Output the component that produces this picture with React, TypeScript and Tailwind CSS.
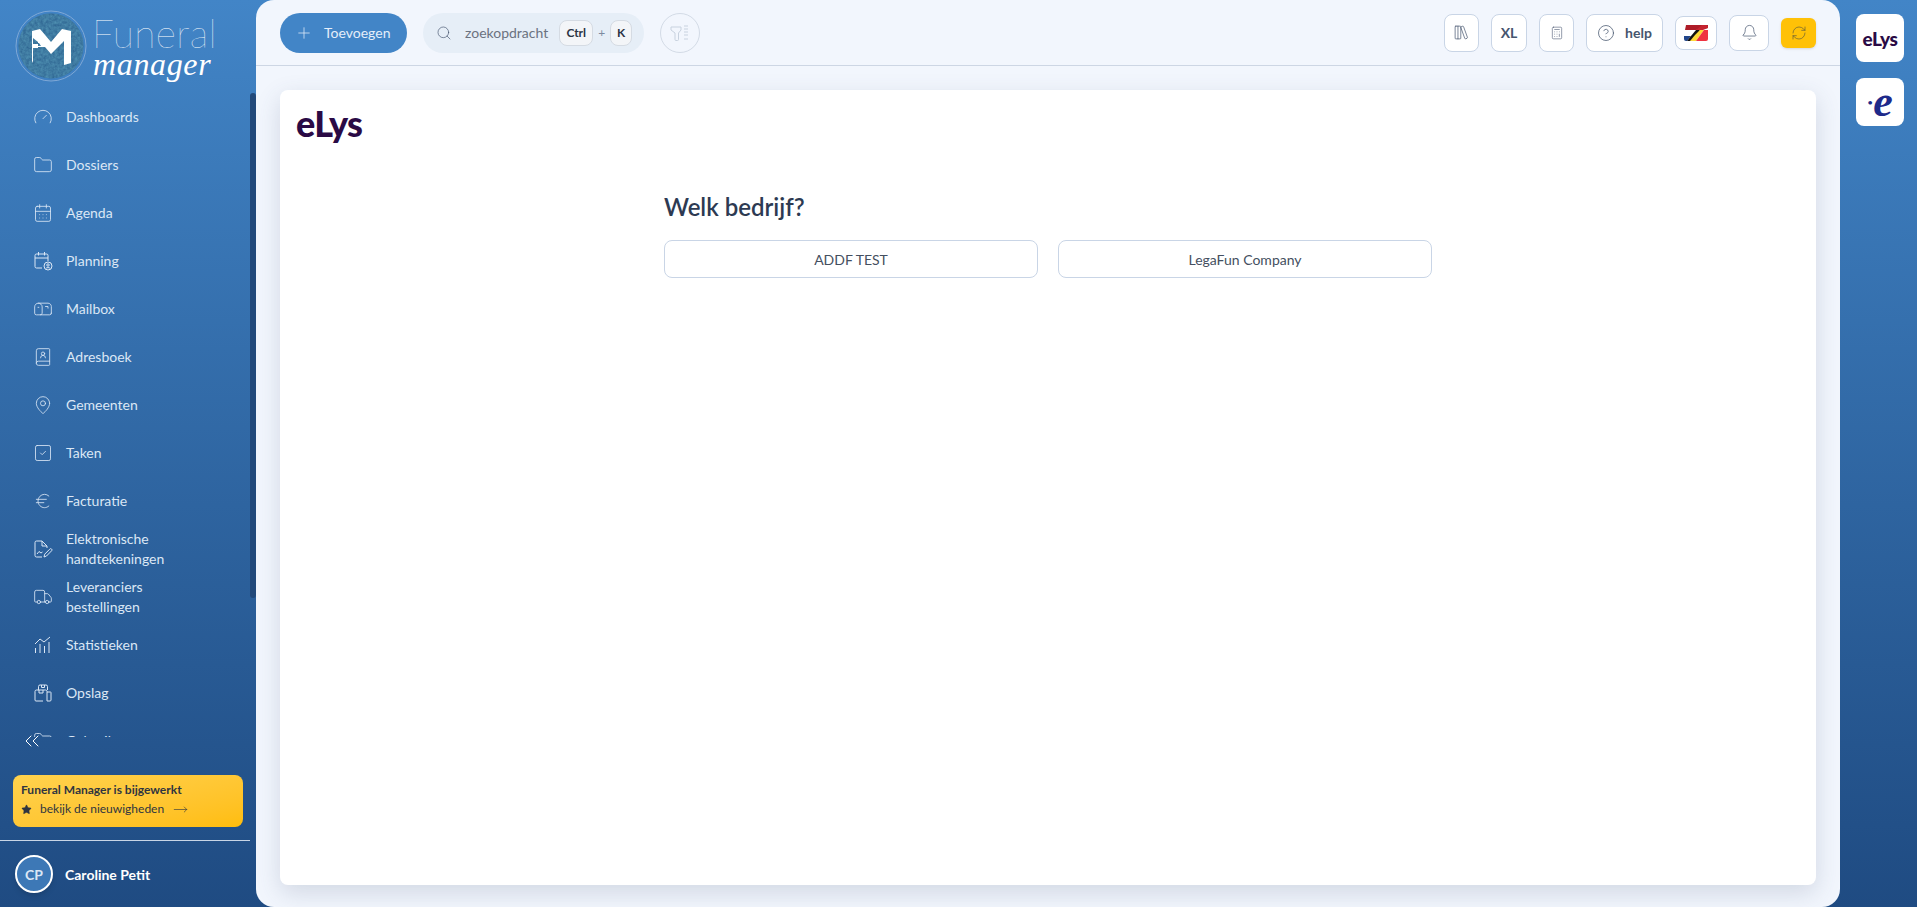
import {
  BookUser,
  CalendarDays,
  ChevronsLeft,
  Euro,
  Folder,
  Gauge,
  MapPin,
  Plus,
  Search,
  SquareCheck,
  Star,
  Truck,
  Mailbox,
  Bell,
  RefreshCw,
  Calculator,
  CircleHelp,
  MoveRight,
  LibraryBig,
} from "lucide-react";
import type { ReactNode } from "react";

const FONT = "font-['Lato','Open_Sans',sans-serif]";

const PlanningIcon = () => (
  <svg width="20" height="20" viewBox="0 0 20 20" fill="none" stroke="currentColor" strokeWidth="1">
    <path d="M9 17H3.5A1.5 1.5 0 0 1 2 15.500V4.500A1.500 1.500 0 0 1 3.500 3h10A1.500 1.500 0 0 1 15 4.500V10" />
    <path d="M2 7h13M5.500 1v3.500M11.500 1v3.500" />
    <circle cx="15" cy="15" r="4" />
    <circle cx="15" cy="14" r="1.200" />
    <path d="M12.800 17.500c.6-1.200 3.800-1.200 4.400 0" />
  </svg>
);

const SignIcon = () => (
  <svg width="20" height="20" viewBox="0 0 20 20" fill="none" stroke="currentColor" strokeWidth="1">
    <path d="M9 18H3.500A1.500 1.500 0 0 1 2 16.500V3.500A1.500 1.500 0 0 1 3.500 2H9l5 5v2" />
    <path d="M9 2v5h5" />
    <path d="M4 15l2-2.500 2 1.500 1.500-1" />
    <path d="M11 18l.7-2.800 5-5a1.200 1.200 0 0 1 2 1.500l-5.200 5.300z" />
  </svg>
);

const StatsIcon = () => (
  <svg width="20" height="20" viewBox="0 0 20 20" fill="none" stroke="currentColor" strokeWidth="1">
    <path d="M2 9l5-5 4 3 6-5" />
    <path d="M2.500 18v-5M7 18V9M11.500 18v-7M16 18V7" />
  </svg>
);

const StorageIcon = () => (
  <svg width="20" height="20" viewBox="0 0 20 20" fill="none" stroke="currentColor" strokeWidth="1">
    <path d="M5.500 7V3.500A1.500 1.500 0 0 1 7 2h6a1.500 1.500 0 0 1 1.500 1.500V7" />
    <path d="M8.500 2v2.500h3V2" />
    <path d="M10 18H3a1 1 0 0 1-1-1V8.500A1.500 1.500 0 0 1 3.500 7h9A1.500 1.500 0 0 1 14 8.500V18" />
    <path d="M14 9h3.500A.5.500 0 0 1 18 9.500V17a1 1 0 0 1-1 1h-3" />
    <path d="M6 7v3h4V7" />
  </svg>
);

const ElysWord = ({ className }: { className: string }) => (
  <span className={`font-['Lato',sans-serif] font-black leading-none tracking-[-0.02em] text-[#2a0a45] ${className}`}>
    eLys
  </span>
);

const FlagIcon = () => (
  <svg width="24" height="16" viewBox="0 0 24 16">
    <path d="M2 0h22v3L12 5H1z" fill="#ae1c28" />
    <path d="M18 0h4a2 2 0 0 1 2 2v1l-5 2H12z" fill="#c4232f" />
    <path d="M1 5h11L7 11H0z" fill="#ffffff" />
    <path d="M0 11h7l-4 5H2a2 2 0 0 1-2-2z" fill="#21468b" />
    <path d="M7 11l-4 5h6l7-11h-4z" fill="#111111" />
    <path d="M12 16H6l5-6 5-5h4z" fill="#fdd835" />
    <path d="M12 16l8-11h4v9a2 2 0 0 1-2 2z" fill="#ef3340" />
  </svg>
);

const LogoMark = () => (
  <svg width="72" height="72" viewBox="0 0 72 72" className="shrink-0">
    <defs>
      <filter id="grain" x="0" y="0" width="100%" height="100%">
        <feTurbulence type="fractalNoise" baseFrequency="0.35" numOctaves="3" seed="4" />
        <feColorMatrix values="0 0 0 0 0.1  0 0 0 0 0.34  0 0 0 0 0.5  0.9 0 0 0 0" />
      </filter>
    </defs>
    <circle cx="36" cy="36" r="35" fill="none" stroke="#7fa8d6" strokeWidth="1" />
    <circle cx="36" cy="36" r="32.500" fill="#2a5f8d" />
    <g clipPath="url(#mark)">
      <circle cx="36" cy="36" r="32.500" filter="url(#grain)" />
    </g>
    <clipPath id="mark">
      <circle cx="36" cy="36" r="32.500" />
    </clipPath>
    <path
      d="M17 53V21l8-2 11 13 11-13 9 2v32l-7 2V31L36 44l-6-7h-7v-1h3l-2-3h-1v-1l-5-4v6h5v4h-5v13z"
      fill="#ffffff"
    />
  </svg>
);

const Box = ({ className, children }: { className: string; children: ReactNode }) => (
  <button className={`flex items-center justify-center rounded-lg border border-[#c9d5e6] bg-white text-[#46556e] ${className}`}>
    {children}
  </button>
);

const menu: { label: ReactNode; icon: ReactNode }[] = [
  { label: "Dashboards", icon: <Gauge size={20} strokeWidth={1} /> },
  { label: "Dossiers", icon: <Folder size={20} strokeWidth={1} /> },
  { label: "Agenda", icon: <CalendarDays size={20} strokeWidth={1} /> },
  { label: "Planning", icon: <PlanningIcon /> },
  { label: "Mailbox", icon: <Mailbox size={20} strokeWidth={1} /> },
  { label: "Adresboek", icon: <BookUser size={20} strokeWidth={1} /> },
  { label: "Gemeenten", icon: <MapPin size={20} strokeWidth={1} /> },
  { label: "Taken", icon: <SquareCheck size={20} strokeWidth={1} /> },
  { label: "Facturatie", icon: <Euro size={20} strokeWidth={1} /> },
  { label: <>Elektronische<br />handtekeningen</>, icon: <SignIcon /> },
  { label: <>Leveranciers<br />bestellingen</>, icon: <Truck size={20} strokeWidth={1} /> },
  { label: "Statistieken", icon: <StatsIcon /> },
  { label: "Opslag", icon: <StorageIcon /> },
  { label: "Gebruikers", icon: <Folder size={20} strokeWidth={1} /> },
];

const Sidebar = () => (
  <aside className="flex h-full w-[256px] shrink-0 flex-col">
    <div className="flex h-[93px] shrink-0 items-center pl-[15px] pb-[2px]">
      <LogoMark />
      <div className="ml-[5px] flex flex-col text-white">
        <span className="font-['Lato',sans-serif] text-[39px] font-thin leading-[38px] tracking-[0.01em]">Funeral</span>
        <span className="-mt-[1px] ml-[1px] font-['Liberation_Serif',serif] text-[32px] italic leading-[26px] tracking-[0.02em]">
          manager
        </span>
      </div>
    </div>

    <div className="relative h-[644px] shrink-0 overflow-hidden">
      <nav className="flex flex-col">
        {menu.map((item, i) => (
          <a key={i} className="flex h-[48px] items-center pl-[33px] text-[#dbe7f5]">
            <span className="flex w-[20px] justify-center">{item.icon}</span>
            <span className="ml-[13px] text-[14px] leading-[20px]">{item.label}</span>
          </a>
        ))}
      </nav>
      <div className="absolute right-0 top-0 h-[505px] w-[6px] rounded-full bg-[#22497a]" />
    </div>

    <div className="relative flex h-[38px] shrink-0 items-start pl-[20px]">
      <ChevronsLeft size={24} strokeWidth={1} className="-mt-[8px] text-white" />
    </div>

    <div className="mx-[13px] h-[52px] shrink-0 rounded-lg bg-gradient-to-br from-[#ffd24d] to-[#ffbd0a] px-[8px] py-[6px] text-[#2f3540]">
      <div className="text-[12px] font-bold leading-[18px]">Funeral Manager is bijgewerkt</div>
      <div className="mt-[1px] flex items-center text-[12px] leading-[18px]">
        <Star size={11} fill="currentColor" strokeWidth={1} />
        <span className="ml-[8px]">bekijk de nieuwigheden</span>
        <MoveRight size={15} strokeWidth={1} className="ml-[9px]" />
      </div>
    </div>

    <div className="mt-[13px] mr-[6px] border-t border-[#c8d5e6]" />

    <div className="flex flex-1 items-center pl-[15px]">
      <div className="flex h-[38px] w-[38px] items-center justify-center rounded-full border-[2px] border-white bg-[#3d78b6] text-[14px] font-bold text-[#dbe7f5] shadow-md">
        CP
      </div>
      <span className="ml-[12px] text-[14px] font-bold text-white">Caroline Petit</span>
    </div>
  </aside>
);

const Topbar = () => (
  <header className="flex h-[66px] shrink-0 items-center border-b border-[#cdd6e4] pl-[24px] pr-[24px]">
    <button className="flex h-[40px] w-[127px] items-center rounded-full bg-[#4285c7] pl-[15px] text-[14px] text-[#e4eefa]">
      <Plus size={18} strokeWidth={1} />
      <span className="ml-[11px]">Toevoegen</span>
    </button>
    <div className="ml-[16px] flex h-[40px] w-[221px] items-center rounded-full bg-[#e6eef7] pl-[13px] text-[#6b7280]">
      <Search size={16} strokeWidth={1} className="text-[#46556e]" />
      <span className="ml-[13px] text-[14px]">zoekopdracht</span>
      <kbd className="ml-[11px] flex h-[26px] w-[34px] items-center justify-center rounded-lg border border-[#d5dbe3] bg-[#f3f5f8] font-['Lato',sans-serif] text-[12px] font-bold text-[#2b3444]">
        Ctrl
      </kbd>
      <span className="mx-[5px] text-[12px] text-[#7c8aa0]">+</span>
      <kbd className="flex h-[26px] w-[22px] items-center justify-center rounded-lg border border-[#d5dbe3] bg-[#f3f5f8] font-['Lato',sans-serif] text-[12px] font-bold text-[#2b3444]">
        K
      </kbd>
    </div>
    <button className="ml-[16px] flex h-[40px] w-[40px] items-center justify-center rounded-full border border-[#d3dbe6] text-[#c8d2df]">
      <svg width="24" height="24" viewBox="0 0 24 24" fill="none" stroke="currentColor" strokeWidth="1">
        <path d="M3 6h10v3l-2.500 3v6.500a1 1 0 0 1-1 1H8a1 1 0 0 1-1-1V12L3 9z" />
        <path d="M16 5h4M16 8h4M16 11h4M16 14h4M16 18h4" />
      </svg>
    </button>

    <div className="ml-auto flex items-center">
      <Box className="h-[38px] w-[35px]">
        <LibraryBig size={17} strokeWidth={1} />
      </Box>
      <Box className="ml-[12px] h-[38px] w-[36px] text-[14px] font-bold">XL</Box>
      <Box className="ml-[12px] h-[38px] w-[35px]">
        <Calculator size={14} strokeWidth={1} />
      </Box>
      <Box className="ml-[12px] h-[38px] w-[77px] text-[14px] font-bold">
        <CircleHelp size={18} strokeWidth={1} />
        <span className="ml-[10px]">help</span>
      </Box>
      <Box className="ml-[12px] h-[34px] w-[42px]">
        <FlagIcon />
      </Box>
      <Box className="ml-[12px] h-[36px] w-[40px]">
        <Bell size={17} strokeWidth={1} />
      </Box>
      <button className="ml-[12px] flex h-[30px] w-[35px] items-center justify-center rounded-md bg-[#ffc107] text-[#5f5a3a] shadow-sm">
        <RefreshCw size={16} strokeWidth={1} />
      </button>
    </div>
  </header>
);

const App = () => {
  return (
    <div className={`flex h-screen w-screen overflow-hidden bg-gradient-to-b from-[#4285c7] to-[#1f4b82] ${FONT}`}>
      <Sidebar />

      <main className="flex h-full w-[1584px] shrink-0 flex-col rounded-[18px] bg-[#f2f6fd]">
        <Topbar />
        <div className="px-[24px] pt-[24px] pb-[22px] flex-1 flex">
          <section className="flex-1 rounded-lg bg-white px-[16px] pt-[16px] shadow-[0_8px_24px_rgba(60,75,110,0.18)]">
            <ElysWord className="block text-[36px] -mt-[1px]" />
            <div className="mx-auto mt-[50px] w-[768px]">
              <h1 className="text-[24px] font-semibold leading-[32px] text-[#2d3a52]">Welk bedrijf?</h1>
              <div className="mt-[17px] grid grid-cols-2 gap-[20px]">
                <button className="h-[38px] rounded-lg border border-[#c9d5e6] text-[14px] text-[#444f60]">ADDF TEST</button>
                <button className="h-[38px] rounded-lg border border-[#c9d5e6] text-[14px] text-[#444f60]">LegaFun Company</button>
              </div>
            </div>
          </section>
        </div>
      </main>

      <aside className="flex flex-1 flex-col items-center gap-[16px] pt-[14px] pl-[3px]">
        <div className="flex h-[48px] w-[48px] items-center justify-center rounded-lg bg-white">
          <ElysWord className="text-[19px]" />
        </div>
        <div className="flex h-[48px] w-[48px] items-center justify-center rounded-lg bg-white">
          <span className="text-[10px] leading-none text-[#1e2a8a]">•</span>
          <span className="font-['Liberation_Serif',serif] text-[44px] font-bold italic leading-[36px] text-[#1e2a8a]">e</span>
        </div>
      </aside>
    </div>
  );
};

export default App;
